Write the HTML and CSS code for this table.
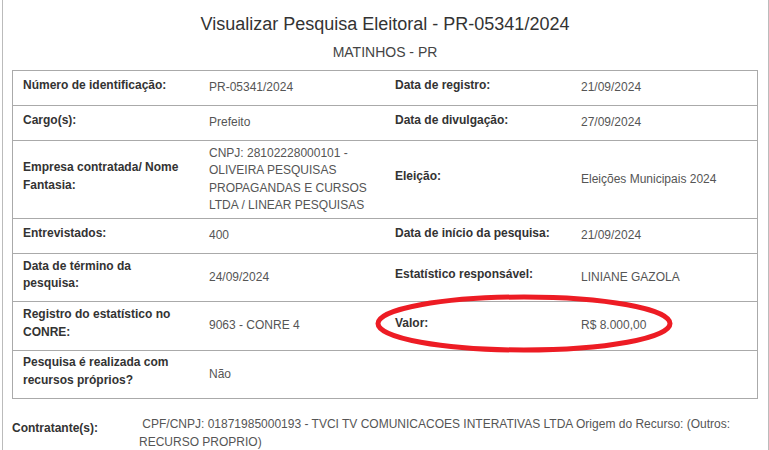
FILE: index.html
```html
<!DOCTYPE html>
<html lang="pt-BR">
<head>
  <meta charset="UTF-8">
  <title>Visualizar Pesquisa Eleitoral</title>
  <link rel="stylesheet" href="styles.css">
</head>
<body>

<div class="frame">

  <h1 class="title">Visualizar Pesquisa Eleitoral - PR-05341/2024</h1>
  <h2 class="subtitle">MATINHOS - PR</h2>

  <div class="details">
    <div class="cell"><label>Número de identificação:</label></div>
    <div class="cell value">PR-05341/2024</div>
    <div class="cell"><label>Data de registro:</label></div>
    <div class="cell value">21/09/2024</div>

    <div class="cell"><label>Cargo(s):</label></div>
    <div class="cell value">Prefeito</div>
    <div class="cell"><label>Data de divulgação:</label></div>
    <div class="cell value">27/09/2024</div>

    <div class="cell"><label>Empresa contratada/ Nome Fantasia:</label></div>
    <div class="cell value">CNPJ: 28102228000101 - OLIVEIRA PESQUISAS PROPAGANDAS E CURSOS LTDA / LINEAR PESQUISAS</div>
    <div class="cell"><label>Eleição:</label></div>
    <div class="cell value">Eleições Municipais 2024</div>

    <div class="cell"><label>Entrevistados:</label></div>
    <div class="cell value">400</div>
    <div class="cell"><label>Data de início da pesquisa:</label></div>
    <div class="cell value">21/09/2024</div>

    <div class="cell"><label>Data de término da pesquisa:</label></div>
    <div class="cell value">24/09/2024</div>
    <div class="cell"><label>Estatístico responsável:</label></div>
    <div class="cell value">LINIANE GAZOLA</div>

    <div class="cell"><label>Registro do estatístico no CONRE:</label></div>
    <div class="cell value">9063 - CONRE 4</div>
    <div class="cell"><label>Valor:</label></div>
    <div class="cell value">R$ 8.000,00</div>

    <div class="cell"><label>Pesquisa é realizada com recursos próprios?</label></div>
    <div class="cell value">Não</div>
    <div class="cell"></div>
    <div class="cell"></div>
  </div>

  <div class="contractor">
    <div class="contractor-label"><label>Contratante(s):</label></div>
    <div class="contractor-value">&nbsp;CPF/CNPJ: 01871985000193 - TVCI TV COMUNICACOES INTERATIVAS LTDA Origem do Recurso: (Outros: RECURSO PROPRIO)</div>
  </div>

  <!-- marcação em vermelho sobre o valor -->
  <svg class="highlight" width="310" height="68" viewBox="0 0 310 68">
    <ellipse cx="154" cy="33.5" rx="146" ry="26.5" fill="none" stroke="#ed1c24" stroke-width="5"/>
  </svg>

</div>

</body>
</html>
```

FILE: styles.css
```css
body {
  margin: 0;
  background: #fff;
  font-family: "Liberation Sans", Arial, sans-serif;
  font-size: 12px;
  color: #333;
}

.frame {
  position: relative;
  margin-left: 2px;
  min-height: 450px;
  padding: 0 10px 0 9px;
  border-left: 1px solid #bbb;
  border-right: 1px solid #bbb;
}

.title {
  margin: 0;
  padding-top: 14px;
  font-size: 18px;
  font-weight: normal;
  line-height: 20px;
  text-align: center;
  color: #333;
}

.subtitle {
  margin: 8px 0 0;
  font-size: 14px;
  font-weight: normal;
  line-height: 20px;
  text-align: center;
  color: #444;
}

label {
  display: inline-block;
  margin-bottom: 5px;
  font-weight: bold;
  line-height: 17.7px;
  color: #333;
}

.details {
  margin-top: 8px;
  display: grid;
  grid-template-columns: repeat(4, 1fr);
  border: 1px solid #aaa;
  border-top: none;
}

.cell {
  display: flex;
  align-items: center;
  min-height: 35px;
  box-sizing: border-box;
  padding: 3.5px 10px;
  border-top: 1px solid #aaa;
}

.value {
  line-height: 17.5px;
  color: #555;
}

.contractor {
  margin-top: 16px;
  display: grid;
  grid-template-columns: 127px 1fr;
}

.contractor-label {
  display: flex;
  align-items: center;
}

.contractor-label label {
  margin-bottom: 8px;
}

.contractor-value {
  line-height: 18px;
  color: #555;
}

.highlight {
  position: absolute;
  left: 367px;
  top: 290px;
}
```
